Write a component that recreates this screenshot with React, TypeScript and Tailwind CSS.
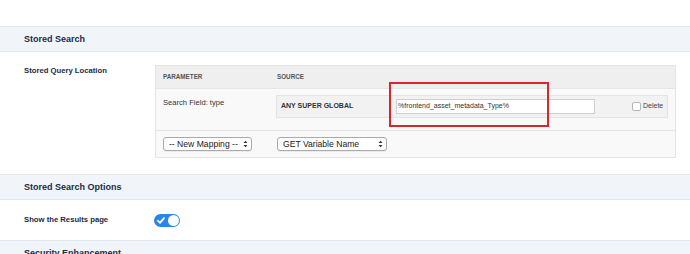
import React, { FC } from 'react'

const SectionHeader: FC<{ title: string }> = ({ title }) => (
  <div className="h-[26px] border-y border-[#dfe6ee] bg-[#f1f5fa] flex items-center pl-6">
    <span className="text-[9px] font-bold leading-none text-[#1c2b46]">{title}</span>
  </div>
)

const FakeSelect: FC<{ label: string; width: string }> = ({ label, width }) => (
  <div className={`${width} h-[14px] rounded-[3px] border border-[#a9a9a9] bg-white flex items-center justify-between pl-[5px] pr-[3px] shadow-[0_1px_0_rgba(0,0,0,0.05)]`}>
    <span className="text-[8.6px] leading-none text-[#222]">{label}</span>
    <svg width="5" height="8" viewBox="0 0 5 8">
      <path d="M0.5 3 L2.5 0.8 L4.5 3 Z" fill="#333" />
      <path d="M0.5 5 L2.5 7.2 L4.5 5 Z" fill="#333" />
    </svg>
  </div>
)

const App: FC = () => {
  return (
    <div className="w-[690px] h-[254px] overflow-hidden bg-white font-['Liberation_Sans',Arial,sans-serif] text-[#1c2b46]">
      <div className="h-[26px]" />
      <SectionHeader title="Stored Search" />

      <div className="flex pt-[13px] pb-[16px]">
        <div className="w-[155px] pl-6 pt-[1px]">
          <p className="text-[7.7px] font-bold leading-[10px]">Stored Query Location</p>
        </div>
        <div className="relative w-[521px] border border-[#e4e4e4] bg-[#f9f9f9]">
          <div className="h-[23px] bg-[#efefef] border-b border-[#e6e6e6] flex items-center text-[6.3px] font-bold text-[#555]">
            <div className="w-[120px] pl-[7px]">PARAMETER</div>
            <div className="pl-[1px]">SOURCE</div>
          </div>
          <div className="h-[42px] border-b border-[#e4e4e4] flex items-start pt-[6px]">
            <div className="w-[120px] pl-[7px] pt-[3px] text-[7.6px] leading-[10px] text-[#333]">Search Field: type</div>
            <div className="w-[392px] h-[23px] bg-[#f2f2f2] border border-[#e4e4e4] flex items-center">
              <div className="w-[119px] pl-[4px] text-[7px] font-bold text-[#333]">ANY SUPER GLOBAL</div>
              <div className="w-[199px] h-[15px] bg-white border border-[#cfcfcf] flex items-center pl-[1px] text-[7px] text-[#333]">
                %frontend_asset_metadata_Type%
              </div>
              <div className="ml-[37px] flex items-center gap-[2px]">
                <div className="w-[9px] h-[9px] rounded-[2px] border border-[#b5b5b5] bg-white" />
                <span className="text-[7px] text-[#444]">Delete</span>
              </div>
            </div>
          </div>
          <div className="h-[26px] flex items-center">
            <div className="w-[120px] pl-[7px]">
              <FakeSelect label="-- New Mapping --" width="w-[89px]" />
            </div>
            <div className="pl-[1px]">
              <FakeSelect label="GET Variable Name" width="w-[110px]" />
            </div>
          </div>
          <div className="absolute left-[233px] top-[16px] w-[160px] h-[45px] border-2 border-[#d8262c]" />
        </div>
      </div>

      <SectionHeader title="Stored Search Options" />

      <div className="h-[40px] flex items-center">
        <div className="w-[154px] pl-6">
          <p className="text-[7.7px] font-bold leading-[10px]">Show the Results page</p>
        </div>
        <div className="w-[26px] h-[13px] rounded-full bg-[#2a87e4] flex items-center justify-between pl-[3px] pr-[1px]">
          <svg width="8" height="7" viewBox="0 0 8 7">
            <path d="M1 3.8 L3 5.8 L7 1.2" stroke="#fff" strokeWidth="1.8" fill="none" strokeLinecap="round" strokeLinejoin="round" />
          </svg>
          <div className="w-[11px] h-[11px] rounded-full bg-white" />
        </div>
      </div>

      <SectionHeader title="Security Enhancement" />
    </div>
  )
}

export default App
